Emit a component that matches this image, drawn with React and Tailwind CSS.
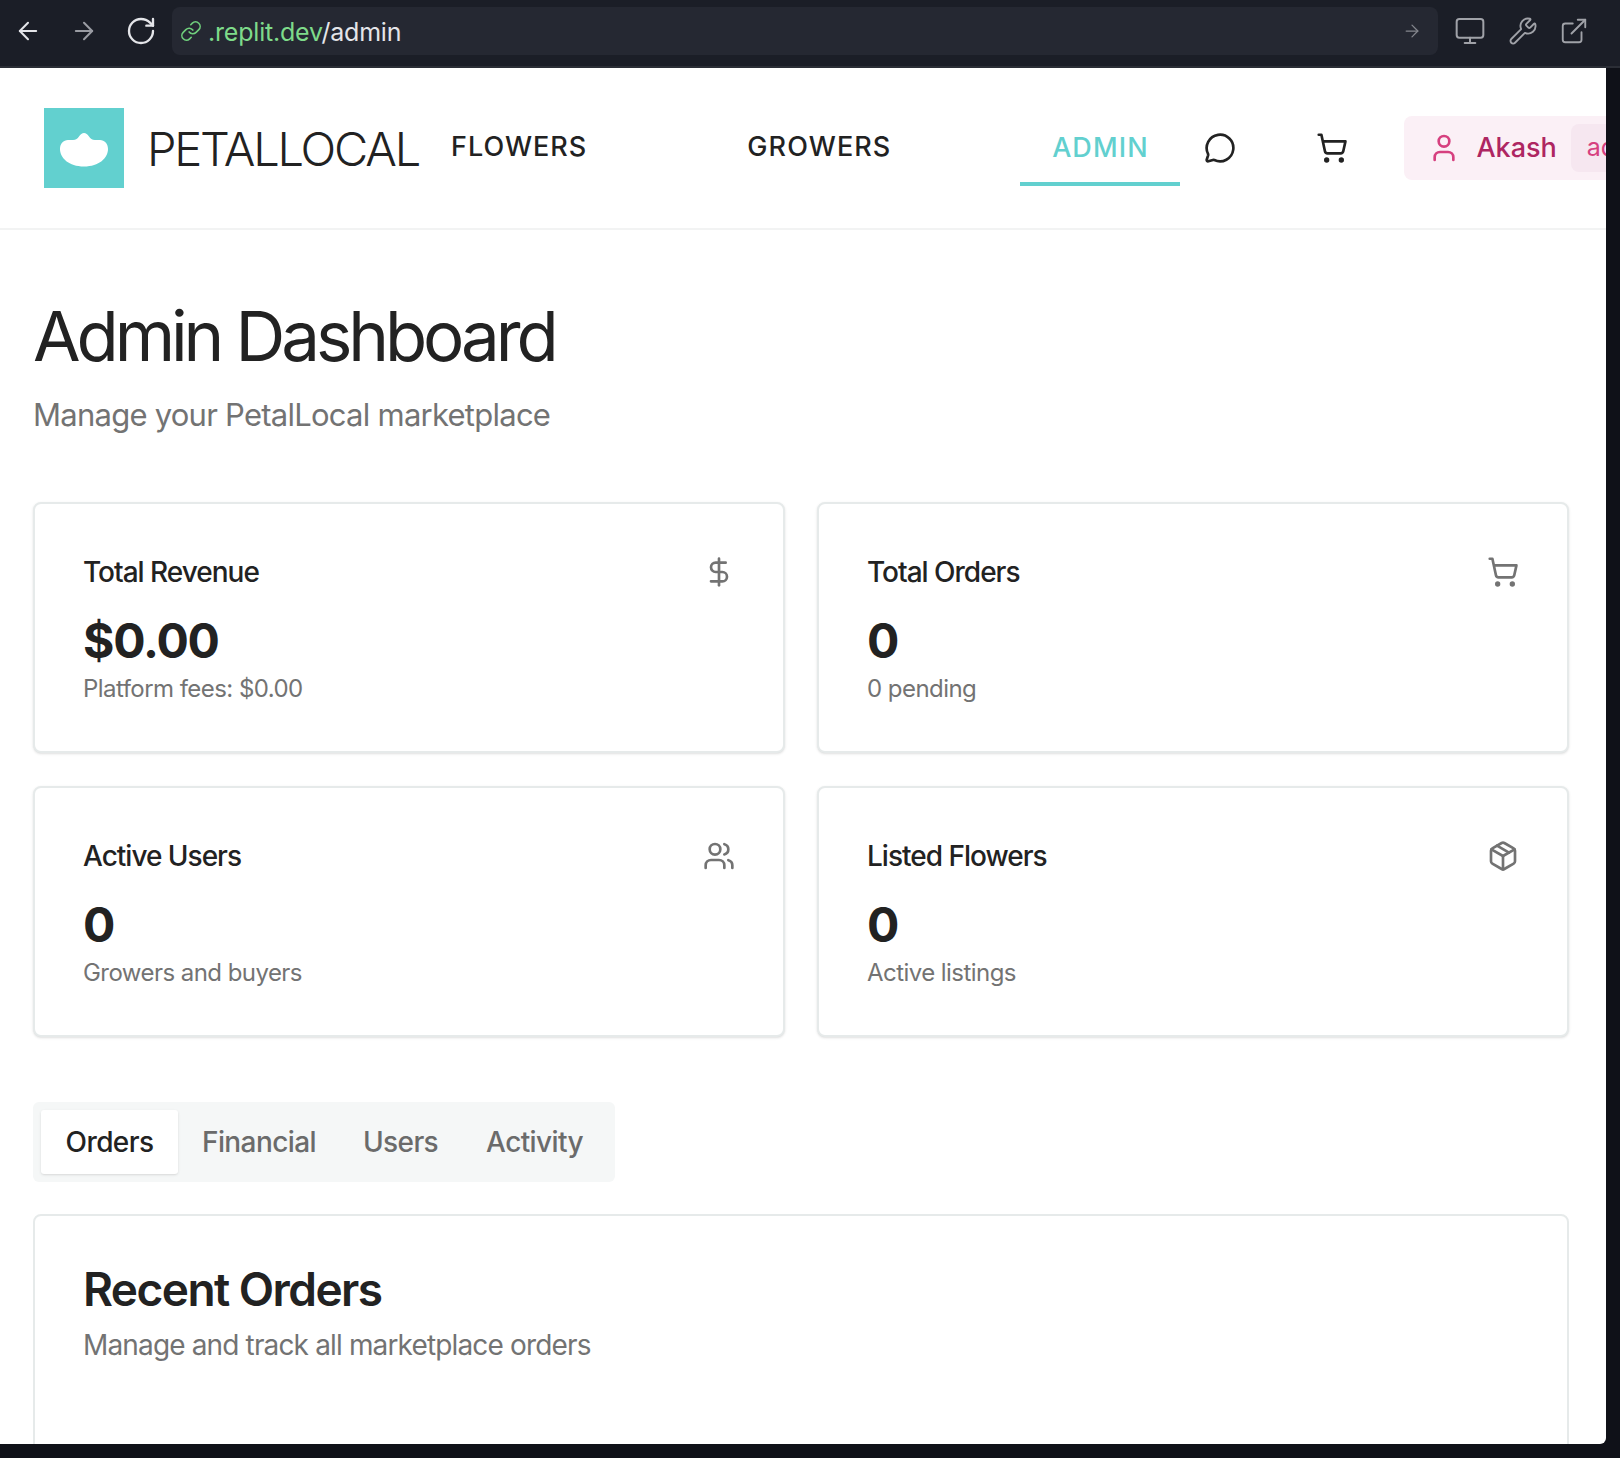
import { ArrowLeft, ArrowRight, RotateCw, Link, Monitor, Wrench, ExternalLink, MessageCircle, ShoppingCart, User, DollarSign, Users, Package } from 'lucide-react'

const STATS = [
  { title: 'Total Revenue', value: '$0.00', note: 'Platform fees: $0.00', icon: <DollarSign size={32} strokeWidth={2} /> },
  { title: 'Total Orders', value: '0', note: '0 pending', icon: <ShoppingCart size={32} strokeWidth={2} /> },
  { title: 'Active Users', value: '0', note: 'Growers and buyers', icon: <Users size={32} strokeWidth={2} /> },
  { title: 'Listed Flowers', value: '0', note: 'Active listings', icon: <Package size={32} strokeWidth={2} /> },
]

function Toolbar() {
  return (
    <div className="flex h-[68px] items-center border-b-2 border-[#2b2e36] bg-[#1b1e27] pb-[4px] pl-[14px] text-[#e4e5e9]">
      <ArrowLeft size={28} strokeWidth={1.75} />
      <ArrowRight size={28} strokeWidth={1.75} className="ml-[28px] text-[#9a9ca3]" />
      <RotateCw size={32} strokeWidth={1.75} className="ml-[27px]" />
      <div className="ml-[15px] flex h-[48px] w-[1266px] items-center rounded-[8px] bg-[#252832] pl-[8px] pr-[16px]">
        <Link size={22} strokeWidth={1.75} className="text-[#6fcf7c]" />
        <span className="ml-[6px] pt-[2px] text-[25px] leading-none tracking-[-0.2px]">
          <span className="text-[#7edb8a]">.replit.dev</span>/admin
        </span>
        <ArrowRight size={20} strokeWidth={1.5} className="ml-auto text-[#85878e]" />
      </div>
      <Monitor size={32} strokeWidth={1.5} className="ml-[16px] text-[#a0a2a8]" />
      <Wrench size={30} strokeWidth={1.5} className="ml-[22px] text-[#a0a2a8]" />
      <ExternalLink size={30} strokeWidth={1.5} className="ml-[21px] text-[#a0a2a8]" />
    </div>
  )
}

function Header() {
  return (
    <header className="flex h-[162px] items-center overflow-hidden border-b-2 border-[#f2f3f3] pl-[44px]">
      <div className="flex h-[80px] w-[80px] shrink-0 items-center justify-center bg-[#62d0cf]">
        <svg width="48" height="34" viewBox="0 0 48 34" fill="#fff" className="mt-[4px]">
          <path d="M24 0c2 0 3.500 1.500 5 3.500s3 3.500 6 3.500h5c4.500 0 8 3.500 8 9 0 9-9 17.500-24 17.500S0 25 0 16c0-5.500 3.500-9 8-9h5c3 0 4.500-1.500 6-3.500C20.500 1.500 22 0 24 0z" />
        </svg>
      </div>
      <span className="ml-[23px] shrink-0 text-[47px] font-light leading-none tracking-[-2.2px] text-[#222]">PETALLOCAL</span>
      <span className="mb-[3px] ml-[32px] shrink-0 text-[27px] font-medium leading-none tracking-[1px] text-[#222]">FLOWERS</span>
      <span className="mb-[3px] ml-[160px] shrink-0 text-[27px] font-medium leading-none tracking-[1.1px] text-[#222]">GROWERS</span>
      <div className="mb-[2px] ml-[129px] flex h-[78px] w-[160px] shrink-0 items-center justify-center border-b-4 border-[#62d0cf] pt-[7px] text-[27px] font-medium tracking-[1.1px] text-[#62d0cf]">ADMIN</div>
      <MessageCircle size={32} strokeWidth={2} className="ml-[24px] shrink-0 text-[#222]" />
      <ShoppingCart size={32} strokeWidth={2} className="ml-[80px] shrink-0 text-[#222]" />
      <div className="ml-[56px] flex h-[64px] w-[300px] shrink-0 items-center rounded-l-[8px] bg-[#fbf0f6] pl-[24px]">
        <User size={32} strokeWidth={2} className="text-[#d6407f]" />
        <span className="ml-[16px] text-[27px] font-medium text-[#ae2662]">Akash</span>
        <span className="ml-[14px] flex h-[48px] w-[100px] items-center rounded-l-[8px] bg-[#f6e7f0] pl-[16px] text-[25px] text-[#d6407f]">admin</span>
      </div>
    </header>
  )
}

function StatCard({ title, value, note, icon }) {
  return (
    <div className="h-[251px] rounded-[8px] border-2 border-[#e6eaea] bg-white pl-[48px] pr-[48px] pt-[51px] shadow-sm">
      <div className="flex h-[34px] items-center justify-between">
        <span className="text-[28px] font-medium tracking-[-1px] text-[#222]">{title}</span>
        <span className="text-[#737373]">{icon}</span>
      </div>
      <div className="mt-[24px] text-[48px] font-bold leading-[56px] tracking-[-1.2px] text-[#222]">{value}</div>
      <div className="mt-[4px] text-[24px] leading-[32px] tracking-[-0.55px] text-[#737373]">{note}</div>
    </div>
  )
}

export default function App() {
  return (
    <div className="h-[1458px] w-[1620px] overflow-hidden bg-[#0f1118] font-['Inter',sans-serif]">
      <Toolbar />
      <div className="h-[1376px] w-[1606px] overflow-hidden rounded-br-[6px] bg-white">
        <Header />
        <main className="px-[33px]">
          <h1 className="mt-[66px] text-[69px] font-normal leading-[80px] tracking-[-4.1px] text-[#222]">Admin Dashboard</h1>
          <p className="mt-[17px] text-[31px] leading-[44px] tracking-[-0.75px] text-[#737373]">Manage your PetalLocal marketplace</p>
          <div className="mt-[65px] grid w-[1536px] grid-cols-2 gap-x-[32px] gap-y-[33px]">
            {STATS.map(s => <StatCard key={s.title} {...s} />)}
          </div>
          <div className="mt-[65px] flex h-[80px] w-[582px] items-center rounded-[6px] bg-[#f5f7f7] px-[8px] text-[28px] font-medium tracking-[-0.6px] text-[#6b6b6b]">
            <div className="flex h-[64px] w-[137px] items-center justify-center rounded-[3px] bg-white text-[#222] shadow-sm">Orders</div>
            <span className="ml-[24px]">Financial</span>
            <span className="ml-[47px]">Users</span>
            <span className="ml-[48px]">Activity</span>
          </div>
          <div className="mt-[32px] h-[300px] w-[1536px] rounded-[8px] border-2 border-[#e6eaea] bg-white pl-[48px] pt-[47px]">
            <h2 className="text-[46px] font-semibold leading-[52px] tracking-[-1.55px] text-[#222]">Recent Orders</h2>
            <p className="mt-[10px] text-[28px] leading-[40px] tracking-[-0.85px] text-[#737373]">Manage and track all marketplace orders</p>
          </div>
        </main>
      </div>
    </div>
  )
}
